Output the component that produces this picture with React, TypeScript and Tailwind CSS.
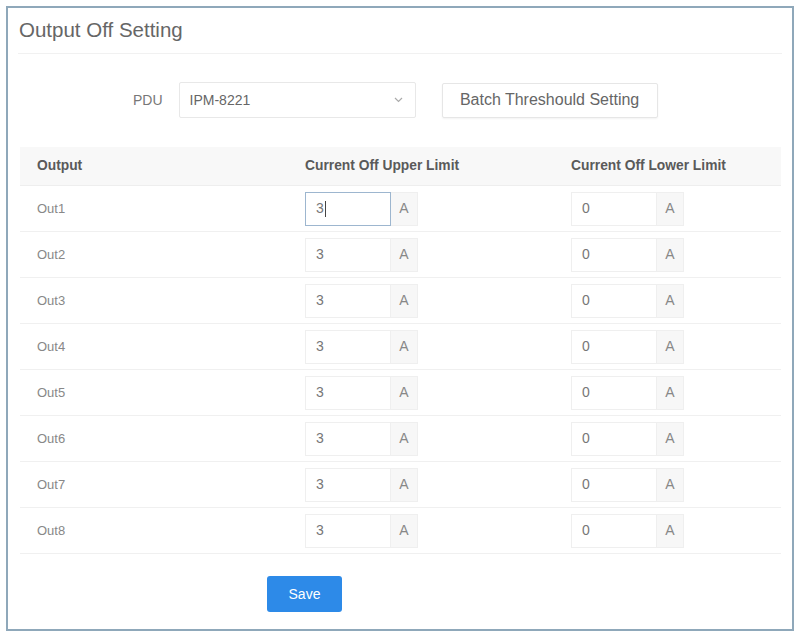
import React from "react";

const rows = ["Out1", "Out2", "Out3", "Out4", "Out5", "Out6", "Out7", "Out8"];

function Field({ value, focused }: { value: string; focused?: boolean }) {
  return (
    <div className="flex h-[34px]">
      <div
        className={`flex w-[86px] items-center border pl-[10px] text-[14px] text-[#777] ${
          focused ? "border-[#9db6cf]" : "border-[#efefef]"
        }`}
      >
        <span>{value}</span>
        {focused && <span className="ml-[1px] h-[16px] w-[1px] bg-[#444]" />}
      </div>
      <div className="flex w-[27px] items-center justify-center border border-l-0 border-[#efefef] bg-[#f7f7f7] text-[14px] text-[#888]">
        A
      </div>
    </div>
  );
}

export default function App() {
  return (
    <div
      className="h-[634px] w-[801px] bg-white p-[6px]"
      style={{ fontFamily: '"Liberation Sans", Arial, sans-serif' }}
    >
      <div className="flex h-[625px] w-[788px] flex-col border-2 border-[#8fa8ba] px-[10px]">
        <div className="flex h-[45px] items-center pl-[1px] text-[20.5px] text-[#666]">
          Output Off Setting
        </div>
        <div className="h-px bg-[#f1f1f1]" />
        <div className="mt-[28px] flex h-[36px] items-center">
          <span className="ml-[115px] text-[14px] text-[#777]">PDU</span>
          <div className="ml-[16px] flex h-[36px] w-[237px] items-center justify-between rounded-[2px] border border-[#e8e8e8] pl-[10px] pr-[12px] text-[14px] text-[#666]">
            <span>IPM-8221</span>
            <svg width="9" height="6" viewBox="0 0 9 6" fill="none">
              <path d="M1 1l3.5 3.5L8 1" stroke="#aaa" strokeWidth="1.2" />
            </svg>
          </div>
          <div className="ml-[26px] flex h-[35px] w-[216px] items-center justify-center rounded-[2px] border border-[#e6e6e6] text-[16px] text-[#666] shadow-[0_1px_2px_rgba(0,0,0,0.05)]">
            Batch Threshould Setting
          </div>
        </div>
        <div className="ml-[2px] mr-[1px] mt-[29px]">
          <div className="grid h-[39px] grid-cols-[268px_266px_1fr] items-center border-b border-[#eeeeee] bg-[#f8f8f8] text-[13.8px] font-bold text-[#5a5a5a]">
            <div className="pl-[17px]">Output</div>
            <div className="pl-[17px]">Current Off Upper Limit</div>
            <div className="pl-[17px]">Current Off Lower Limit</div>
          </div>
          {rows.map((r, i) => (
            <div
              key={r}
              className="grid h-[46px] grid-cols-[268px_266px_1fr] items-center border-b border-[#f0f0f0] text-[13px] text-[#888]"
            >
              <div className="pl-[17px]">{r}</div>
              <div className="pl-[17px]">
                <Field value="3" focused={i === 0} />
              </div>
              <div className="pl-[17px]">
                <Field value="0" />
              </div>
            </div>
          ))}
        </div>
        <div className="ml-[249px] mt-[22px] flex h-[36px] w-[75px] items-center justify-center rounded-[3px] bg-[#2d8ae8] text-[14px] text-white">
          Save
        </div>
      </div>
    </div>
  );
}
